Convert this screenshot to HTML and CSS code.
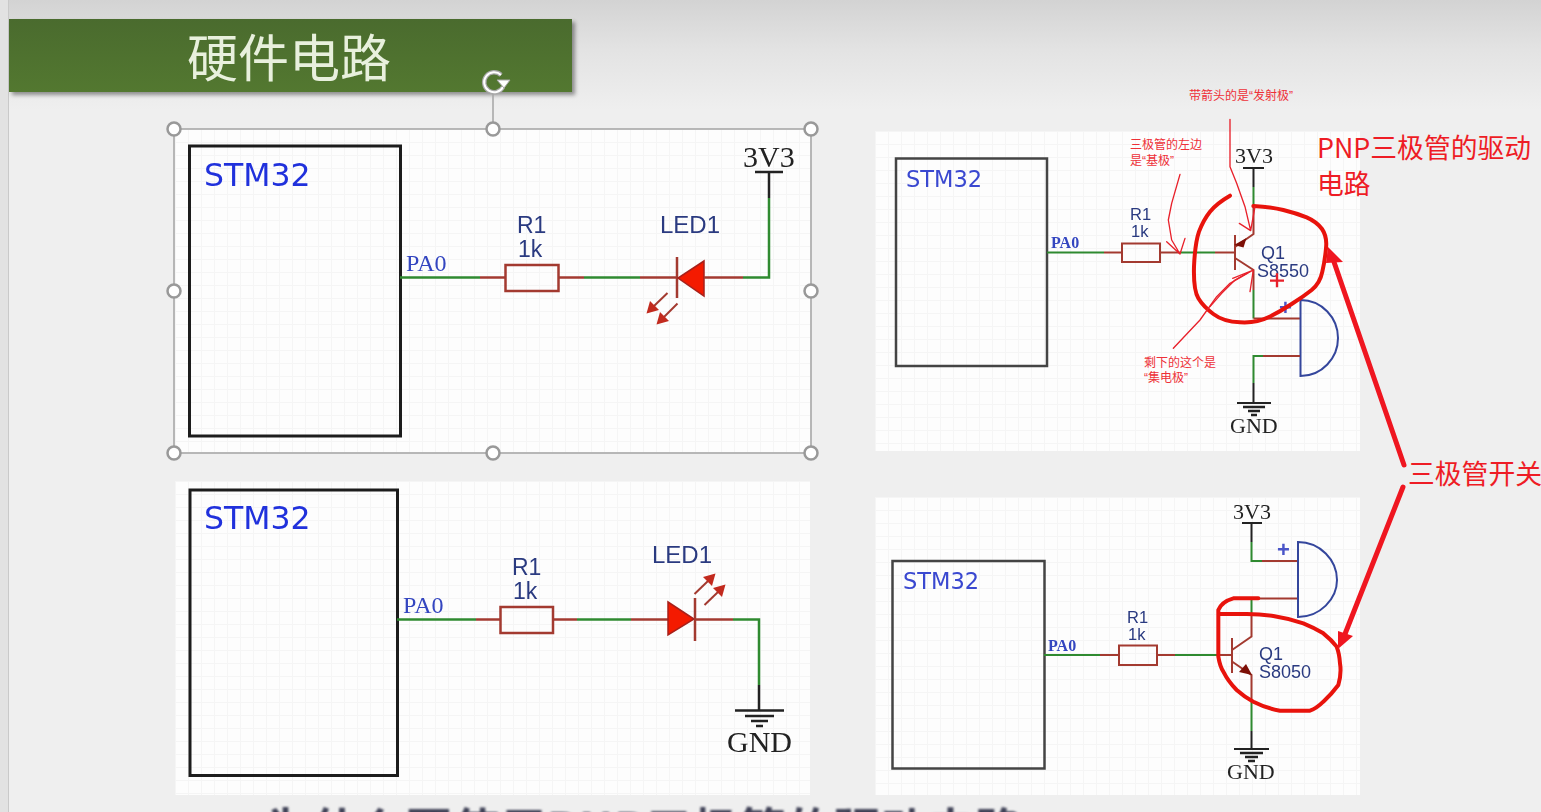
FILE: index.html
```html
<!DOCTYPE html>
<html lang="zh-CN">
<head>
<meta charset="utf-8">
<title>硬件电路</title>
<link rel="stylesheet" href="styles.css">
</head>
<body>
<main class="slide">
  <h1 class="title"><span>硬件电路</span></h1>
  <div class="boards">
    <section class="col col-left">
      <svg class="board board-a" viewBox="175 129 635 323" width="635" height="323">
        <rect class="chip" x="189.5" y="146" width="211" height="290"/>
        <text class="stm" x="204" y="186">STM32</text>
        <text class="net net-lg" x="406" y="271">PA0</text>
        <polyline class="wire" points="400,277.5 480,277.5"/>
        <line class="lead" x1="480" y1="277.5" x2="505" y2="277.5"/>
        <rect class="res" x="505.5" y="265" width="53" height="26"/>
        <line class="lead" x1="558" y1="277.5" x2="584" y2="277.5"/>
        <line class="wire" x1="584" y1="277.5" x2="640" y2="277.5"/>
        <line class="lead" x1="640" y1="277.5" x2="677" y2="277.5"/>
        <line class="lead" x1="677" y1="257" x2="677" y2="298"/>
        <polygon class="diode" points="704,261 704,296 678,278"/>
        <line class="lead" x1="704" y1="277.5" x2="743" y2="277.5"/>
        <polyline class="wire" points="743,277.5 769,277.5 769,198"/>
        <polyline class="blk" points="769,198 769,172"/>
        <line class="blk" x1="755" y1="172" x2="783" y2="172"/>
        <text class="pwr pwr-lg" x="743" y="167">3V3</text>
        <text class="ref ref-r" x="517" y="233">R1</text>
        <text class="ref ref-r" x="518" y="257">1k</text>
        <text class="ref ref-lg" x="660" y="233">LED1</text>
        <line class="lead thin" x1="667.5" y1="293" x2="654" y2="306"/>
        <polygon class="tip" points="646.5,313.5 650,301 659,310"/>
        <line class="lead thin" x1="677.5" y1="303.5" x2="664" y2="317"/>
        <polygon class="tip" points="656.5,324.5 660,312 669,321"/>
      </svg>
      <svg class="board board-b" viewBox="175 481 635 314" width="635" height="314">
        <rect class="chip" x="190" y="490" width="207.5" height="285.5"/>
        <text class="stm" x="204" y="529">STM32</text>
        <text class="net net-lg" x="403" y="613">PA0</text>
        <line class="wire" x1="397" y1="619.5" x2="476" y2="619.5"/>
        <line class="lead" x1="476" y1="619.5" x2="500" y2="619.5"/>
        <rect class="res" x="500.5" y="607" width="52.5" height="26"/>
        <line class="lead" x1="553" y1="619.5" x2="577" y2="619.5"/>
        <line class="wire" x1="577" y1="619.5" x2="631" y2="619.5"/>
        <line class="lead" x1="631" y1="619.5" x2="668" y2="619.5"/>
        <polygon class="diode" points="668,602 668,635 694,619"/>
        <line class="lead" x1="695" y1="598" x2="695" y2="641"/>
        <line class="lead" x1="695" y1="619.5" x2="733" y2="619.5"/>
        <polyline class="wire" points="733,619.5 759,619.5 759,685"/>
        <line class="blk" x1="759" y1="685" x2="759" y2="710"/>
        <line class="blk" x1="735" y1="710.5" x2="784" y2="710.5"/>
        <line class="blk" x1="745" y1="716" x2="774" y2="716"/>
        <line class="blk" x1="751" y1="721" x2="768" y2="721"/>
        <line class="blk" x1="756" y1="726" x2="763" y2="726"/>
        <text class="pwr pwr-lg" x="727" y="752">GND</text>
        <text class="ref ref-r" x="512" y="575">R1</text>
        <text class="ref ref-r" x="513" y="599">1k</text>
        <text class="ref ref-lg" x="652" y="563">LED1</text>
        <line class="lead thin" x1="694.5" y1="594" x2="708" y2="581"/>
        <polygon class="tip" points="715.5,573.5 712,586 703,577"/>
        <line class="lead thin" x1="704.5" y1="605" x2="718" y2="592"/>
        <polygon class="tip" points="725.5,584.5 722,597 713,588"/>
      </svg>
      <h2 class="next-title">为什么要使用PNP三极管的驱动电路</h2>
    </section>
    <section class="col col-right">
      <svg class="board board-c" viewBox="875 131 485 320" width="485" height="320">
        <rect class="chip soft" x="896" y="158.5" width="151" height="207.5"/>
        <text class="stm stm-sm" x="906" y="187">STM32</text>
        <text class="net net-sm" x="1051" y="248">PA0</text>
        <line class="wire w2" x1="1047" y1="252.5" x2="1104" y2="252.5"/>
        <line class="lead w2" x1="1104" y1="252.5" x2="1122" y2="252.5"/>
        <rect class="res w2" x="1122" y="243.5" width="38" height="18.5"/>
        <line class="lead w2" x1="1160" y1="252.5" x2="1180" y2="252.5"/>
        <line class="wire w2" x1="1180" y1="252.5" x2="1215" y2="252.5"/>
        <line class="lead w2" x1="1215" y1="252.5" x2="1235" y2="252.5"/>
        <line class="lead w2" x1="1235" y1="235" x2="1235" y2="270"/>
        <polyline class="lead w2" points="1235,247 1253.5,234 1253.5,205"/>
        <polygon class="tip-dark" points="1234,245 1246.5,238 1243.5,247.5"/>
        <line class="wire w2" x1="1253.5" y1="205" x2="1253.5" y2="187"/>
        <line class="blk w2" x1="1253.5" y1="187" x2="1253.5" y2="168"/>
        <line class="blk w2" x1="1243" y1="168" x2="1264" y2="168"/>
        <polyline class="lead w2" points="1235,258 1253.5,270 1253.5,290"/>
        <polyline class="wire w2" points="1253.5,290 1253.5,318.5"/>
        <line class="lead w2" x1="1253.5" y1="318.5" x2="1300" y2="318.5"/>
        <path class="buzz" d="M1300.5 300 V376 C1322 376 1338 358 1338 338 C1338 318 1322 300 1300.5 300 Z"/>
        <line class="lead w2" x1="1263" y1="356" x2="1300" y2="356"/>
        <polyline class="wire w2" points="1263,356 1253.5,356 1253.5,383"/>
        <line class="blk w2" x1="1253.5" y1="383" x2="1253.5" y2="403"/>
        <line class="blk w2" x1="1237" y1="403" x2="1271" y2="403"/>
        <line class="blk" x1="1243" y1="407" x2="1265" y2="407"/>
        <line class="blk" x1="1248" y1="411" x2="1260" y2="411"/>
        <line class="blk" x1="1251" y1="415" x2="1257" y2="415"/>
        <text class="pwr pwr-sm" x="1235" y="163">3V3</text>
        <text class="pwr pwr-sm" x="1230" y="433">GND</text>
        <text class="ref ref-sm" x="1130" y="220">R1</text>
        <text class="ref ref-sm" x="1131" y="237">1k</text>
        <text class="ref ref-md" x="1261" y="259">Q1</text>
        <text class="ref ref-md" x="1257" y="277">S8550</text>
        <text class="plus" x="1279" y="315">+</text>
      </svg>
      <svg class="board board-d" viewBox="875 497 485 298" width="485" height="298">
        <rect class="chip soft" x="892.5" y="561" width="152" height="207.5"/>
        <text class="stm stm-sm" x="903" y="589">STM32</text>
        <text class="net net-sm" x="1048" y="651">PA0</text>
        <line class="wire w2" x1="1044" y1="655" x2="1100" y2="655"/>
        <line class="lead w2" x1="1100" y1="655" x2="1119" y2="655"/>
        <rect class="res w2" x="1119" y="645.5" width="38" height="19.5"/>
        <line class="lead w2" x1="1157" y1="655" x2="1175" y2="655"/>
        <line class="wire w2" x1="1175" y1="655" x2="1217" y2="655"/>
        <line class="lead w2" x1="1217" y1="655" x2="1232" y2="655"/>
        <line class="lead w2" x1="1232" y1="638" x2="1232" y2="673"/>
        <polyline class="lead w2" points="1232,650 1251.5,636.5 1251.5,613"/>
        <line class="wire w2" x1="1251.5" y1="613" x2="1251.5" y2="600"/>
        <line class="lead w2" x1="1251.5" y1="598.5" x2="1298" y2="598.5"/>
        <polyline class="lead w2" points="1232,661.5 1251.5,675 1251.5,700"/>
        <polygon class="tip-dark" points="1252,675 1239,672 1246,664"/>
        <line class="wire w2" x1="1251.5" y1="700" x2="1251.5" y2="731"/>
        <line class="blk w2" x1="1251.5" y1="731" x2="1251.5" y2="749"/>
        <line class="blk w2" x1="1234" y1="749" x2="1269" y2="749"/>
        <line class="blk" x1="1240" y1="753" x2="1263" y2="753"/>
        <line class="blk" x1="1245" y1="757" x2="1258" y2="757"/>
        <line class="blk" x1="1248" y1="761" x2="1255" y2="761"/>
        <text class="pwr pwr-sm" x="1227" y="779">GND</text>
        <text class="pwr pwr-sm" x="1233" y="519">3V3</text>
        <line class="blk w2" x1="1242" y1="523" x2="1262" y2="523"/>
        <line class="blk w2" x1="1251.5" y1="523" x2="1251.5" y2="542"/>
        <polyline class="wire w2" points="1251.5,542 1251.5,561 1262,561"/>
        <line class="lead w2" x1="1262" y1="561" x2="1298" y2="561"/>
        <path class="buzz" d="M1298 542 V617 C1320 617 1337 599 1337 580 C1337 560 1320 542 1298 542 Z"/>
        <text class="plus" x="1277" y="557">+</text>
        <text class="ref ref-sm" x="1127" y="623">R1</text>
        <text class="ref ref-sm" x="1128" y="640">1k</text>
        <text class="ref ref-md" x="1259" y="660">Q1</text>
        <text class="ref ref-md" x="1259" y="678">S8050</text>
      </svg>
    </section>
  </div>

  <svg class="markup" viewBox="0 0 1541 812" width="1541" height="812">
    <rect class="sel" x="174" y="129" width="637" height="324"/>
    <line class="sel" x1="493" y1="129" x2="493" y2="94"/>
    <circle class="handle" cx="174" cy="129" r="6.5"/>
    <circle class="handle" cx="493" cy="129" r="6.5"/>
    <circle class="handle" cx="811" cy="129" r="6.5"/>
    <circle class="handle" cx="174" cy="291" r="6.5"/>
    <circle class="handle" cx="811" cy="291" r="6.5"/>
    <circle class="handle" cx="174" cy="453" r="6.5"/>
    <circle class="handle" cx="493" cy="453" r="6.5"/>
    <circle class="handle" cx="811" cy="453" r="6.5"/>
    <path class="rot-halo" d="M501 75 A10 10 0 1 0 503 87"/>
    <path class="rot" d="M501 75 A10 10 0 1 0 503 87"/>
    <polygon class="rot-tip" points="497,80 510,80 504,88"/>

    <g transform="translate(1040 80) scale(.33333)">
      <path class="loop" d="M570 347 Q530 370 510 395 Q490 420 477 455 Q465 490 462 560 Q460 630 475 655 Q490 680 520 702 Q550 725 600 727 Q650 730 685 712 Q720 695 755 672 Q790 650 815 630 Q840 610 847 575 Q855 540 858 505 Q862 470 846 447 Q830 425 800 412 Q770 400 730 390 Q690 380 640 378"/>
      <path class="note" d="M570 118 L570 260 L590 310 L615 380 L632 452 M598 430 L632 452 L645 380"/>
      <path class="note" d="M420 283 L395 370 L385 420 L395 480 L420 522 M380 485 L420 522 L435 475"/>
      <path class="note" d="M400 805 L480 720 L530 650 L570 610 L640 570 M578 595 L640 570 L630 635"/>
      <path class="note" d="M510 680 L545 640 L585 600 L620 580"/>
      <path class="cross" d="M711 580 V622 M690 602 H732"/>
    </g>
    <g transform="translate(1040 490) scale(.33333)">
      <path class="loop" d="M655 325 L580 325 Q545 335 535 360 L535 500 Q540 530 550 545 Q565 575 590 600 Q612 620 640 635 Q680 655 720 662 L810 662 Q830 655 850 635 Q875 612 895 585 Q905 550 900 520 Q898 490 890 470 Q875 450 850 430 Q820 412 790 400 Q745 385 700 378 Q660 372 620 372 L535 372"/>
    </g>

    <line class="pointer" x1="1404" y1="465" x2="1334" y2="262"/>
    <polygon class="pointer-tip" points="1328,247 1343,262 1326,263"/>
    <line class="pointer" x1="1403" y1="487" x2="1345" y2="634"/>
    <polygon class="pointer-tip" points="1338,649 1353,636 1338,631"/>

    <text class="big-note" x="1317" y="158">PNP三极管的驱动</text>
    <text class="big-note" x="1317" y="194">电路</text>
    <text class="big-note" x="1408" y="484">三极管开关</text>
    <text class="small-note" x="1189" y="100">带箭头的是“发射极”</text>
    <text class="small-note" x="1130" y="149">三极管的左边</text>
    <text class="small-note" x="1130" y="165">是“基极”</text>
    <text class="small-note" x="1144" y="367">剩下的这个是</text>
    <text class="small-note" x="1144" y="382">“集电极”</text>
  </svg>
</main>
</body>
</html>
```
FILE: styles.css
```css
* { box-sizing: border-box; }

html, body {
  margin: 0;
  padding: 0;
  background: #efefef;
}

.slide {
  position: relative;
  width: 1541px;
  height: 812px;
  overflow: hidden;
  border-left: 8px solid #e2e2e2;
  background: linear-gradient(180deg, #d3d3d3 0, #e3e3e3 50px, #efefef 110px);
  box-shadow: inset 1px 0 0 #c9c9c9;
  padding-top: 19px;
  font-family: "Noto Sans CJK SC", "Noto Sans", sans-serif;
}

.title {
  margin: 0 0 0 1px;
  width: 563px;
  height: 73px;
  display: flex;
  align-items: center;
  justify-content: center;
  background: linear-gradient(180deg, #4a6b2e, #537830);
  box-shadow: 3px 3px 4px rgba(0, 0, 0, .4);
  color: #e8f0dd;
  font-size: 51px;
  font-weight: 400;
  line-height: 1;
}

.title span { margin-left: -3px; filter: blur(.4px); }

.boards {
  display: flex;
  gap: 65px;
  margin-left: 167px;
}

.col {
  display: flex;
  flex-direction: column;
}

.col-left { width: 635px; padding-top: 37px; gap: 29px; }
.col-right { width: 485px; padding-top: 39px; gap: 46px; }

.board {
  display: block;
  background-color: #fdfdfd;
  background-image:
    linear-gradient(#f5f5f5 1px, transparent 1px),
    linear-gradient(90deg, #f5f5f5 1px, transparent 1px);
  background-size: 13px 13px;
  filter: blur(.45px);
}

.next-title {
  margin: -28px 0 0 90px;
  height: 60px;
  line-height: 60px;
  font-size: 46px;
  font-weight: 700;
  letter-spacing: 1px;
  white-space: nowrap;
  color: #3f4156;
  filter: blur(.9px);
}

.chip { fill: none; stroke: #1c1c1c; stroke-width: 3; }
.chip.soft { stroke: #444; stroke-width: 2.5; }

.wire, .lead, .blk, .res { fill: none; stroke-width: 2.5; }
.wire { stroke: #2f8a30; }
.lead, .res { stroke: #a33a30; }
.blk { stroke: #222; }
.w2 { stroke-width: 2; }
.thin { stroke-width: 2; }
.diode { fill: #f41a00; stroke: #a8201a; stroke-width: 1.5; }
.tip { fill: #c22a1e; }
.tip-dark { fill: #7c0f06; }
.buzz { fill: none; stroke: #34469c; stroke-width: 2; }

.stm { font-family: "DejaVu Sans", sans-serif; font-size: 31.5px; fill: #2031dc; }
.stm-sm { font-size: 22.5px; fill: #3a48d0; }
.net { font-family: "Liberation Serif", serif; fill: #3446c0; }
.net-lg { font-size: 24px; }
.net-sm { font-size: 16px; font-weight: 700; }
.pwr { font-family: "Liberation Serif", serif; fill: #222; }
.pwr-lg { font-size: 30px; }
.pwr-sm { font-size: 22px; }
.ref { font-family: "Liberation Sans", sans-serif; fill: #2a3a80; }
.ref-lg { font-size: 24px; }
.ref-r { font-size: 23px; }
.ref-sm { font-size: 16.5px; }
.ref-md { font-size: 18px; }
.plus { font-family: "Liberation Sans", sans-serif; font-size: 22px; font-weight: 700; fill: #4a55c8; }

.markup {
  position: absolute;
  top: 0;
  left: -8px;
}

.sel { fill: none; stroke: #a4a4a4; stroke-width: 1.5; }
.handle { fill: #fff; stroke: #999; stroke-width: 2.5; }
.rot-halo { fill: none; stroke: #a8a8a8; stroke-width: 4.5; }
.rot { fill: none; stroke: #fff; stroke-width: 2; }
.rot-tip { fill: #fff; stroke: #a8a8a8; stroke-width: 1; }

.loop { fill: none; stroke: #e8130c; stroke-width: 12; stroke-linejoin: round; stroke-linecap: round; }
.note { fill: none; stroke: #e8202a; stroke-width: 4; stroke-linejoin: round; stroke-linecap: round; }
.cross { fill: none; stroke: #e8202a; stroke-width: 7; }

.pointer { stroke: #ef1620; stroke-width: 5; stroke-linecap: round; }
.pointer-tip { fill: #ef1620; }

.big-note { font-family: "Noto Sans CJK SC", sans-serif; font-size: 26.8px; fill: #ee1c25; }
.small-note { font-family: "Liberation Sans", "Noto Sans CJK SC", sans-serif; font-size: 12px; fill: #ee3038; }
```
